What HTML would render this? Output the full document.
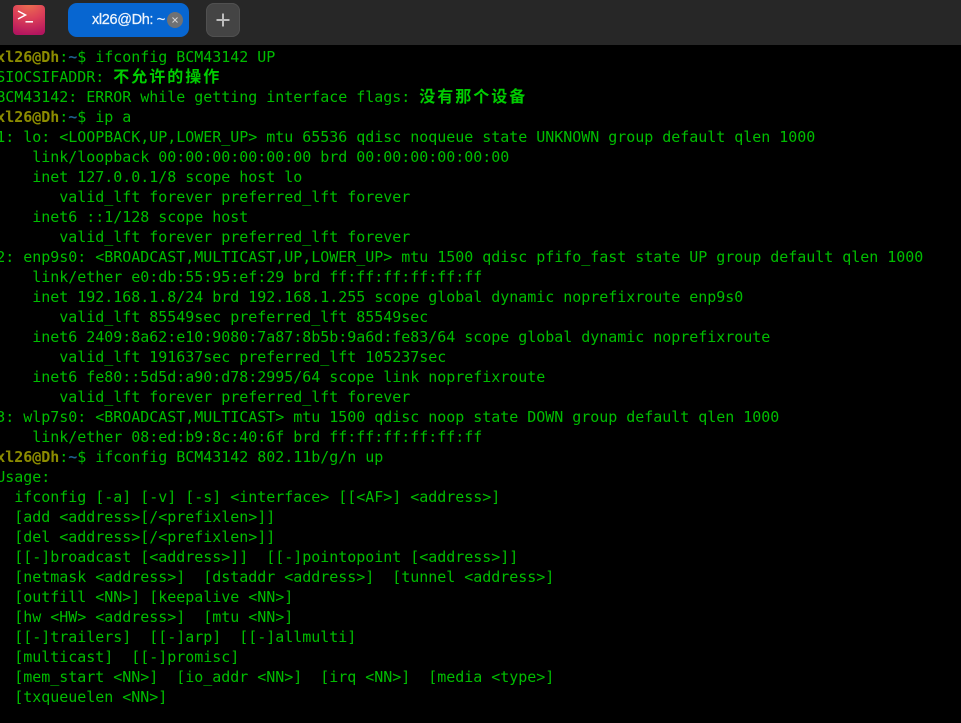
<!DOCTYPE html>
<html>
<head>
<meta charset="utf-8">
<style>
html,body{margin:0;padding:0;background:#000;width:961px;height:723px;overflow:hidden}
#bar{position:absolute;left:0;top:0;width:961px;height:45px;background:#272727}
#icon{position:absolute;left:13px;top:5px;width:32px;height:30px;border-radius:4px;background:radial-gradient(ellipse 36px 32px at 16px -2px,#ec7350 0%,#dc3f58 50%,#b3155f 100%)}
#tab{position:absolute;left:68px;top:3px;width:121px;height:34px;border-radius:9px;background:#0766d1}
#tabt{position:absolute;left:92px;top:12px;color:#eef4fc;font:14.5px/17px "Liberation Sans",sans-serif;letter-spacing:-.35px;-webkit-text-stroke:.25px #eef4fc;white-space:nowrap}
#close{position:absolute;left:167px;top:12px;width:16px;height:16px;border-radius:50%;background:#6f7174}
#plus{position:absolute;left:206px;top:3px;width:34px;height:34px;border-radius:8px;background:#444;box-shadow:inset 0 0 0 1px #505050}
#term{position:absolute;left:-3.8px;top:47px;margin:0;color:#00bd00;font:15px/20px "DejaVu Sans Mono",monospace;letter-spacing:-.03px;white-space:pre;filter:blur(.3px)}
#term b.u{color:#8c8c00;font-weight:bold}
#term i{color:#1f5f8f;font-style:normal;font-weight:bold}
#term b.c{font-family:"Noto Sans CJK SC","WenQuanYi Zen Hei",sans-serif;font-weight:bold;font-size:16px;letter-spacing:2px;color:#00cc00;line-height:0}
</style>
</head>
<body>
<div id="bar"></div>
<div id="icon"><svg width="32" height="30" style="position:absolute;left:0;top:0"><path d="M5 6L12.5 10L5 14" fill="none" stroke="#fff" stroke-width="1.5"/><path d="M12.5 16.8H20" stroke="#fff" stroke-width="1.5"/></svg></div>
<div id="tab"></div>
<div id="tabt">xl26@Dh: ~</div>
<div id="close"><svg width="16" height="16" style="position:absolute;left:0;top:0"><path d="M5.5 5.5L10.5 10.5M10.5 5.5L5.5 10.5" stroke="#d8d8d8" stroke-width="1"/></svg></div>
<div id="plus"><svg width="34" height="34" style="position:absolute;left:0;top:0"><path d="M17 10.5V23.5M10.5 17H23.5" stroke="#bdbdbd" stroke-width="2"/></svg></div>
<pre id="term"><b class="u">xl26@Dh</b>:<i>~</i>$ ifconfig BCM43142 UP
SIOCSIFADDR: <b class="c">不允许的操作</b>
BCM43142: ERROR while getting interface flags: <b class="c">没有那个设备</b>
<b class="u">xl26@Dh</b>:<i>~</i>$ ip a
1: lo: &lt;LOOPBACK,UP,LOWER_UP&gt; mtu 65536 qdisc noqueue state UNKNOWN group default qlen 1000
    link/loopback 00:00:00:00:00:00 brd 00:00:00:00:00:00
    inet 127.0.0.1/8 scope host lo
       valid_lft forever preferred_lft forever
    inet6 ::1/128 scope host 
       valid_lft forever preferred_lft forever
2: enp9s0: &lt;BROADCAST,MULTICAST,UP,LOWER_UP&gt; mtu 1500 qdisc pfifo_fast state UP group default qlen 1000
    link/ether e0:db:55:95:ef:29 brd ff:ff:ff:ff:ff:ff
    inet 192.168.1.8/24 brd 192.168.1.255 scope global dynamic noprefixroute enp9s0
       valid_lft 85549sec preferred_lft 85549sec
    inet6 2409:8a62:e10:9080:7a87:8b5b:9a6d:fe83/64 scope global dynamic noprefixroute 
       valid_lft 191637sec preferred_lft 105237sec
    inet6 fe80::5d5d:a90:d78:2995/64 scope link noprefixroute 
       valid_lft forever preferred_lft forever
3: wlp7s0: &lt;BROADCAST,MULTICAST&gt; mtu 1500 qdisc noop state DOWN group default qlen 1000
    link/ether 08:ed:b9:8c:40:6f brd ff:ff:ff:ff:ff:ff
<b class="u">xl26@Dh</b>:<i>~</i>$ ifconfig BCM43142 802.11b/g/n up
Usage:
  ifconfig [-a] [-v] [-s] &lt;interface&gt; [[&lt;AF&gt;] &lt;address&gt;]
  [add &lt;address&gt;[/&lt;prefixlen&gt;]]
  [del &lt;address&gt;[/&lt;prefixlen&gt;]]
  [[-]broadcast [&lt;address&gt;]]  [[-]pointopoint [&lt;address&gt;]]
  [netmask &lt;address&gt;]  [dstaddr &lt;address&gt;]  [tunnel &lt;address&gt;]
  [outfill &lt;NN&gt;] [keepalive &lt;NN&gt;]
  [hw &lt;HW&gt; &lt;address&gt;]  [mtu &lt;NN&gt;]
  [[-]trailers]  [[-]arp]  [[-]allmulti]
  [multicast]  [[-]promisc]
  [mem_start &lt;NN&gt;]  [io_addr &lt;NN&gt;]  [irq &lt;NN&gt;]  [media &lt;type&gt;]
  [txqueuelen &lt;NN&gt;]</pre>
</body>
</html>
